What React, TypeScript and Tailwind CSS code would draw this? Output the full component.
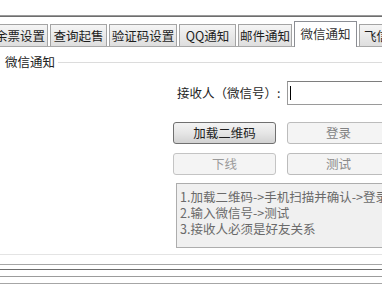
import React from "react";

const TABS = [
  { label: "余票设置", w: "w-[56px] -ml-[8px]", active: false },
  { label: "查询起售", w: "w-[57px]", active: false },
  { label: "验证码设置", w: "w-[68px]", active: false },
  { label: "QQ通知", w: "w-[57px]", active: false },
  { label: "邮件通知", w: "w-[54px]", active: false },
  { label: "微信通知", w: "w-[63px]", active: true },
  { label: "飞信通知", w: "w-[60px]", active: false },
];

const font = {
  fontFamily: '"Microsoft YaHei", "Noto Sans CJK SC", "Liberation Sans", sans-serif',
};

export default function App() {
  return (
    <div
      className="relative w-[382px] h-[285px] overflow-hidden bg-white text-[12px] text-[#1e1e1e]"
      style={font}
    >
      {/* top frame */}
      <div className="h-[15px]" />
      <div className="h-px bg-[#9a9a9a]" />
      <div className="h-px bg-[#6e6e6e]" />

      {/* tab strip */}
      <div className="mt-[5px] flex h-[25px] items-end gap-[2px] border-b border-[#a8a8a8]">
        {TABS.map((t) =>
          t.active ? (
            <div
              key={t.label}
              className={`${t.w} shrink-0 -mb-px flex h-[26px] items-center justify-center border border-b-0 border-[#8c8e94] bg-white text-[12.5px] leading-none text-[#333]`}
            >
              {t.label}
            </div>
          ) : (
            <div
              key={t.label}
              className={`${t.w} shrink-0 flex h-[22px] items-center justify-center border border-b-0 border-[#a4a4a4] bg-gradient-to-b from-[#f5f5f5] to-[#dedede] pt-px text-[12.5px] leading-none`}
            >
              {t.label}
            </div>
          )
        )}
      </div>

      {/* group box */}
      <div className="mt-[8px] flex h-[14px] items-center">
        <span className="ml-[5px] text-[12.5px] leading-none text-[#222]">微信通知</span>
        <div className="ml-[3px] h-px flex-1 bg-[#dcdcdc]" />
      </div>

      <div className="ml-[173px] flex flex-col">
        {/* receiver */}
        <div className="mt-[12px] flex h-[24px] items-center">
          <span className="ml-[4px] w-[105px] whitespace-nowrap text-[12.5px] leading-none">
            接收人（微信号）:
          </span>
          <div className="ml-[7px] flex h-[24px] w-[120px] shrink-0 items-center border border-[#9a9a9a] border-t-[#7e7e7e] bg-white">
            <div className="ml-[2px] h-[14px] w-px bg-black" />
          </div>
        </div>

        {/* buttons */}
        <div className="mt-[17px] flex gap-[11px]">
          <button className="flex h-[22px] w-[103px] shrink-0 items-center justify-center rounded-[3px] border border-[#707070] bg-gradient-to-b from-[#f3f3f3] via-[#e6e6e6] to-[#d2d2d2] text-[12.5px] leading-none text-[#1e1e1e]">
            加载二维码
          </button>
          <button className="flex h-[22px] w-[103px] shrink-0 items-center justify-center rounded-[3px] border border-[#bcbcbc] bg-[#f4f4f4] text-[12.5px] leading-none text-[#838383]">
            登录
          </button>
        </div>
        <div className="mt-[9px] flex gap-[11px]">
          <button className="flex h-[22px] w-[103px] shrink-0 items-center justify-center rounded-[3px] border border-[#c4c4c4] bg-[#f4f4f4] text-[12.5px] leading-none text-[#9a9a9a]">
            下线
          </button>
          <button className="flex h-[22px] w-[103px] shrink-0 items-center justify-center rounded-[3px] border border-[#bcbcbc] bg-[#f4f4f4] text-[12.5px] leading-none text-[#8a8a8a]">
            测试
          </button>
        </div>

        {/* hint box */}
        <div className="ml-[3px] mt-[8px] h-[65px] w-[260px] border border-[#adadad] bg-[#f0f0f0] pl-[3px] pt-[5px] text-[12.5px] leading-[16px] text-[#6a6a6a]">
          <div className="whitespace-nowrap">1.加载二维码-&gt;手机扫描并确认-&gt;登录</div>
          <div className="whitespace-nowrap">2.输入微信号-&gt;测试</div>
          <div className="whitespace-nowrap">3.接收人必须是好友关系</div>
        </div>
      </div>

      {/* bottom frame */}
      <div className="mt-[6px] h-px bg-[#e4e4e4]" />
      <div className="mt-[9px] h-px bg-[#a6a6a6]" />
      <div className="mt-[4px] h-px bg-[#6e6e6e]" />
      <div className="mt-[6px] h-px bg-[#9c9c9c]" />
      <div className="mt-[6px] h-px bg-[#a6a6a6]" />
    </div>
  );
}
